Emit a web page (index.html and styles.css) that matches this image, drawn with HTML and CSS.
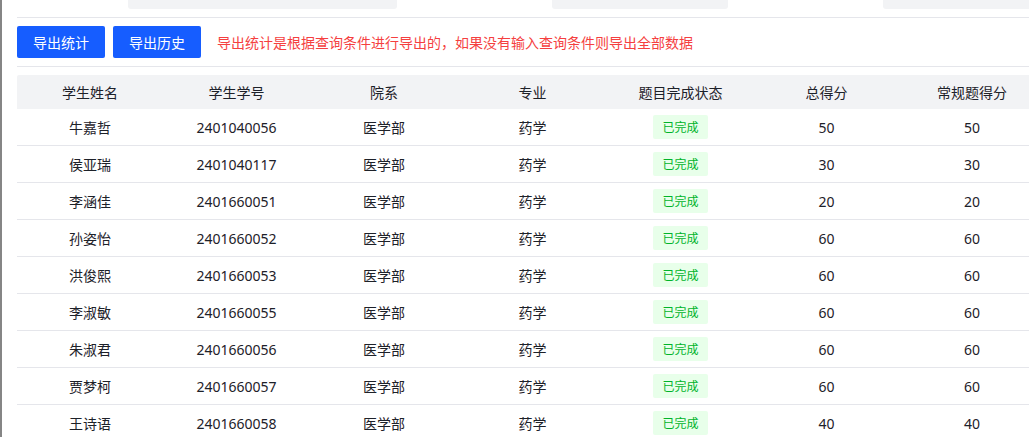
FILE: index.html
```html
<!DOCTYPE html>
<html lang="zh-CN">
<head>
<meta charset="utf-8">
<title>导出统计</title>
<link rel="stylesheet" href="styles.css">
</head>
<body>
<div class="page">
  <div class="filters">
    <div class="field field-1"></div>
    <div class="field field-2"></div>
    <div class="field field-3"></div>
  </div>
  <div class="toolbar">
    <button class="btn">导出统计</button>
    <button class="btn">导出历史</button>
    <span class="hint">导出统计是根据查询条件进行导出的，如果没有输入查询条件则导出全部数据</span>
  </div>
  <table class="grid">
    <colgroup>
      <col class="c1"><col class="c2"><col class="c3"><col class="c4"><col class="c5"><col class="c6"><col class="c7">
    </colgroup>
    <thead>
      <tr><th>学生姓名</th><th>学生学号</th><th>院系</th><th>专业</th><th>题目完成状态</th><th>总得分</th><th class="last">常规题得分</th></tr>
    </thead>
    <tbody>
      <tr><td>牛嘉哲</td><td>2401040056</td><td>医学部</td><td>药学</td><td><span class="tag">已完成</span></td><td>50</td><td class="last">50</td></tr>
      <tr><td>侯亚瑞</td><td>2401040117</td><td>医学部</td><td>药学</td><td><span class="tag">已完成</span></td><td>30</td><td class="last">30</td></tr>
      <tr><td>李涵佳</td><td>2401660051</td><td>医学部</td><td>药学</td><td><span class="tag">已完成</span></td><td>20</td><td class="last">20</td></tr>
      <tr><td>孙姿怡</td><td>2401660052</td><td>医学部</td><td>药学</td><td><span class="tag">已完成</span></td><td>60</td><td class="last">60</td></tr>
      <tr><td>洪俊熙</td><td>2401660053</td><td>医学部</td><td>药学</td><td><span class="tag">已完成</span></td><td>60</td><td class="last">60</td></tr>
      <tr><td>李淑敏</td><td>2401660055</td><td>医学部</td><td>药学</td><td><span class="tag">已完成</span></td><td>60</td><td class="last">60</td></tr>
      <tr><td>朱淑君</td><td>2401660056</td><td>医学部</td><td>药学</td><td><span class="tag">已完成</span></td><td>60</td><td class="last">60</td></tr>
      <tr><td>贾梦柯</td><td>2401660057</td><td>医学部</td><td>药学</td><td><span class="tag">已完成</span></td><td>60</td><td class="last">60</td></tr>
      <tr><td>王诗语</td><td>2401660058</td><td>医学部</td><td>药学</td><td><span class="tag">已完成</span></td><td>40</td><td class="last">40</td></tr>
    </tbody>
  </table>
</div>
</body>
</html>
```

FILE: styles.css
```css
html, body {
  margin: 0;
  padding: 0;
  background: #ffffff;
  overflow: hidden;
}

body {
  font-family: "Noto Sans", "Noto Sans CJK SC", sans-serif;
  font-size: 14px;
  color: #1d2129;
}

.page {
  width: 1029px;
  height: 437px;
  overflow: hidden;
  border-left: 2px solid #858585;
  padding-left: 15px;
  box-sizing: border-box;
}

.filters {
  display: flex;
  height: 17px;
  align-items: flex-start;
}

.field {
  height: 9px;
  background: #f2f3f5;
  border-radius: 0 0 3px 3px;
}

.field-1 { margin-left: 111px; width: 269px; }
.field-2 { margin-left: 155px; width: 176px; }
.field-3 { margin-left: 155px; flex: 1; border-bottom-right-radius: 0; }

.toolbar {
  display: flex;
  align-items: center;
  gap: 8px;
  padding: 8px 0;
  border-top: 1px solid #e5e6eb;
  border-bottom: 1px solid #e5e6eb;
}

.btn {
  height: 32px;
  width: 88px;
  padding: 0;
  border: none;
  border-radius: 2px;
  background: #165dff;
  color: #ffffff;
  font-family: "Noto Sans CJK SC", sans-serif;
  font-size: 14px;
  line-height: 32px;
}

.hint {
  margin-left: 8px;
  color: #f53f3f;
  font-family: "Noto Sans CJK SC", sans-serif;
  font-size: 14px;
}

.grid {
  margin-top: 8px;
  border-collapse: collapse;
  table-layout: fixed;
  width: 1012px;
}

.c1 { width: 146px; }
.c2 { width: 147px; }
.c3 { width: 148px; }
.c4 { width: 149px; }
.c5 { width: 147px; }
.c6 { width: 145px; }
.c7 { width: 130px; }

.grid th {
  height: 34px;
  padding: 0;
  background: #f2f3f5;
  font-weight: normal;
  text-align: center;
  color: #1d2129;
  font-family: "Noto Sans CJK SC", sans-serif;
}

.grid th:first-child { border-top-left-radius: 2px; }

.grid td {
  height: 36px;
  padding: 0;
  text-align: center;
  border-bottom: 1px solid #e5e6eb;
}

.grid .last { padding-left: 16px; }

.tag {
  display: inline-block;
  height: 24px;
  line-height: 24px;
  padding: 0 9px;
  border-radius: 2px;
  background: #e8ffea;
  color: #00b42a;
  font-family: "Noto Sans CJK SC", sans-serif;
  font-size: 12px;
  vertical-align: middle;
}
```
